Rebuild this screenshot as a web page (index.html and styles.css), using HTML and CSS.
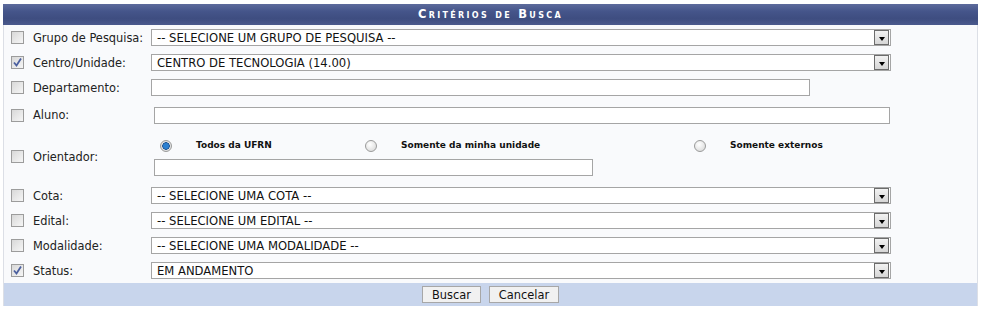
FILE: index.html
```html
<!DOCTYPE html>
<html lang="pt-BR">
<head>
<meta charset="utf-8">
<title>Critérios de Busca</title>
<link rel="stylesheet" href="styles.css">
</head>
<body>
<div class="panel">
  <div class="caption">Critérios de Busca</div>
  <div class="body">
    <div class="row h25">
      <span class="cb"></span>
      <span class="lbl">Grupo de Pesquisa:</span>
      <div class="select w740"><span class="val">-- SELECIONE UM GRUPO DE PESQUISA --</span><span class="btn"><i></i></span></div>
    </div>
    <div class="row h25">
      <span class="cb checked"><svg viewBox="0 0 13 13" width="13" height="13"><path d="M3 6.5 L5.5 9.5 L10 2.5" fill="none" stroke="#4b5f9f" stroke-width="1.8"/></svg></span>
      <span class="lbl">Centro/Unidade:</span>
      <div class="select w740"><span class="val">CENTRO DE TECNOLOGIA (14.00)</span><span class="btn"><i></i></span></div>
    </div>
    <div class="row h25">
      <span class="cb"></span>
      <span class="lbl">Departamento:</span>
      <div class="input w659"></div>
    </div>
    <div class="row h30">
      <span class="cb"></span>
      <span class="lbl">Aluno:</span>
      <div class="input w736 shift"></div>
    </div>
    <div class="row h53">
      <span class="cb"></span>
      <span class="lbl">Orientador:</span>
      <div class="orient">
        <div class="radios">
          <div class="opt o1"><span class="radio on"></span><span class="rlbl">Todos da UFRN</span></div>
          <div class="opt o2"><span class="radio"></span><span class="rlbl">Somente da minha unidade</span></div>
          <div class="opt o3"><span class="radio"></span><span class="rlbl">Somente externos</span></div>
        </div>
        <div class="input w439"></div>
      </div>
    </div>
    <div class="row h25">
      <span class="cb"></span>
      <span class="lbl">Cota:</span>
      <div class="select w740"><span class="val">-- SELECIONE UMA COTA --</span><span class="btn"><i></i></span></div>
    </div>
    <div class="row h25">
      <span class="cb"></span>
      <span class="lbl">Edital:</span>
      <div class="select w740"><span class="val">-- SELECIONE UM EDITAL --</span><span class="btn"><i></i></span></div>
    </div>
    <div class="row h25">
      <span class="cb"></span>
      <span class="lbl">Modalidade:</span>
      <div class="select w740"><span class="val">-- SELECIONE UMA MODALIDADE --</span><span class="btn"><i></i></span></div>
    </div>
    <div class="row h25">
      <span class="cb checked"><svg viewBox="0 0 13 13" width="13" height="13"><path d="M3 6.5 L5.5 9.5 L10 2.5" fill="none" stroke="#4b5f9f" stroke-width="1.8"/></svg></span>
      <span class="lbl">Status:</span>
      <div class="select w740"><span class="val">EM ANDAMENTO</span><span class="btn"><i></i></span></div>
    </div>
  </div>
  <div class="foot">
    <button class="b b1">Buscar</button>
    <button class="b b2">Cancelar</button>
  </div>
</div>
</body>
</html>
```

FILE: styles.css
```css
html, body { margin: 0; padding: 0; background: #fff; }
body { font-family: "DejaVu Sans", Verdana, sans-serif; font-size: 11.4px; color: #222; }

.panel { margin: 4px 0 0 3px; width: 975px; }

.caption {
  height: 21px;
  line-height: 21px;
  text-align: center;
  color: #fff;
  font-weight: bold;
  font-variant: small-caps;
  font-size: 11.5px;
  letter-spacing: 2.3px;
  background: linear-gradient(#5d6b9c 0%, #45558a 35%, #3e4d80 70%, #4b5a8d 100%);
}

.body {
  background: #f9fafc;
  border-left: 1px solid #dcdfe6;
  border-right: 1px solid #dcdfe6;
}

.row { display: flex; align-items: center; padding-left: 7px; }
.h25 { height: 25px; }
.h30 { height: 30px; }
.h53 { height: 53px; }

.cb {
  width: 11px; height: 11px;
  border: 1px solid #9c9c9c;
  background: linear-gradient(135deg, #d8d8d8, #f6f6f6);
  position: relative;
  flex: none;
}
.cb svg { position: absolute; left: -1px; top: -1px; }

.lbl { width: 118px; margin-left: 9px; flex: none; }

.select {
  height: 15px;
  border: 1px solid #a5a5a5;
  background: #fff;
  display: flex;
  align-items: center;
  justify-content: space-between;
  box-sizing: content-box;
}
.w740 { width: 738px; }
.val { padding-left: 5px; color: #111; white-space: nowrap; font-size: 11.6px; }
.btn {
  width: 13px; height: 13px;
  margin-right: 1px;
  border: 1px solid #6c6c6c;
  background: linear-gradient(#f2f2f2, #d6d6d6);
  display: flex;
  align-items: flex-end;
  justify-content: center;
}
.btn i {
  width: 0; height: 0;
  border-left: 3.5px solid transparent;
  border-right: 3.5px solid transparent;
  border-top: 4px solid #000;
  margin-bottom: 3px;
}

.input {
  height: 15px;
  border: 1px solid #a5a5a5;
  background: #fff;
}
.w659 { width: 657px; }
.w736 { width: 734px; }
.w439 { width: 437px; }
.shift { margin-left: 3px; }

.orient { margin-left: 3px; display: flex; flex-direction: column; align-self: flex-start; padding-top: 3px; }
.radios { display: flex; height: 26px; align-items: center; }
.opt { display: flex; align-items: center; }
.o1 { width: 205px; padding-left: 6px; }
.o2 { width: 329px; }
.rlbl { font-weight: bold; font-size: 9px; color: #111; margin-left: 24px; margin-top: -3px; }

.radio {
  width: 10px; height: 10px;
  border-radius: 50%;
  border: 1px solid #9a9a9a;
  background: radial-gradient(circle at 40% 35%, #ffffff, #d5d5d5);
  flex: none;
}
.radio.on {
  background: radial-gradient(circle at 50% 50%, #2b7fd0 0 2.5px, #1a4f8e 3.5px, #e8e8e8 4px, #c8c8c8 100%);
}

.foot {
  height: 23px;
  background: #c8d5ec;
  display: flex;
  justify-content: center;
  align-items: center;
  gap: 8px;
  border-left: 1px solid #dcdfe6;
  border-right: 1px solid #dcdfe6;
}
.b {
  font-family: "DejaVu Sans", Verdana, sans-serif;
  font-size: 11.4px;
  color: #111;
  height: 17px;
  padding: 0;
  background: #f1f1f1;
  border: 1px solid #a7a7a7;
  border-radius: 0;
}
.b1 { width: 59px; }
.b2 { width: 70px; }
```
